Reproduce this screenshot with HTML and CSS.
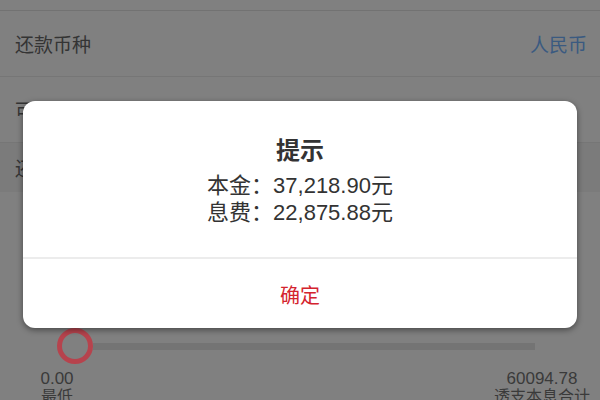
FILE: index.html
```html
<!DOCTYPE html>
<html lang="zh-CN">
<head>
<meta charset="utf-8">
<title>提示</title>
<link rel="stylesheet" href="styles.css">
</head>
<body>
<div class="page">
  <div class="stub"></div>
  <div class="row">
    <span class="label">还款币种</span>
    <span class="value">人民币</span>
  </div>
  <div class="row">
    <span class="label">可还金额</span>
  </div>
  <div class="section">
    <span class="label">还款金额</span>
  </div>
  <div class="slider-area">
    <div class="slider">
      <div class="knob"></div>
      <div class="track"></div>
    </div>
    <div class="ends">
      <div class="end">
        <div class="num">0.00</div>
        <div class="cap">最低</div>
      </div>
      <div class="end end-right">
        <div class="num">60094.78</div>
        <div class="cap">透支本息合计</div>
      </div>
    </div>
  </div>
</div>

<div class="dialog">
  <div class="dialog-body">
    <div class="dialog-title">提示</div>
    <div class="dialog-line">本金：37,218.90元</div>
    <div class="dialog-line">息费：22,875.88元</div>
  </div>
  <div class="dialog-button">确定</div>
</div>
</body>
</html>
```

FILE: styles.css
```css
html, body {
  margin: 0;
  padding: 0;
}

body {
  width: 600px;
  height: 400px;
  overflow: hidden;
  background: #808080;
  font-family: "Liberation Sans", "Noto Sans CJK SC", sans-serif;
  color: #343434;
}

.page {
  display: flex;
  flex-direction: column;
}

.stub {
  height: 10px;
  border-bottom: 1px solid #727272;
}

.row {
  height: 65px;
  border-bottom: 1px solid #767676;
  display: flex;
  align-items: center;
  justify-content: space-between;
  padding: 0 13px 0 15px;
  font-size: 19px;
}

.label {
  font-family: "Noto Sans CJK SC", sans-serif;
}

.value {
  font-family: "Noto Sans CJK SC", sans-serif;
  color: #3a5a80;
}

.section {
  height: 49px;
  background: #7b7b7b;
  display: flex;
  align-items: center;
  padding: 0 15px;
  font-size: 19px;
}

.slider-area {
  padding-top: 136px;
}

.slider {
  display: flex;
  align-items: center;
  height: 36px;
  padding-left: 57px;
}

.knob {
  width: 26px;
  height: 26px;
  border: 5px solid #b6434d;
  border-radius: 50%;
  flex: none;
}

.track {
  width: 442px;
  height: 7px;
  background: #747474;
}

.ends {
  display: flex;
  justify-content: space-between;
  margin-top: 6px;
  padding: 0 3px 0 17px;
}

.end {
  display: flex;
  flex-direction: column;
  align-items: center;
  width: 80px;
}

.end-right {
  width: 110px;
}

.num {
  font-size: 17px;
  line-height: 17px;
  color: #3a3a3a;
}

.cap {
  font-family: "Noto Sans CJK SC", sans-serif;
  font-size: 16px;
  line-height: 17px;
  color: #3a3a3a;
}

.dialog {
  position: absolute;
  left: 23px;
  top: 101px;
  width: 554px;
  background: #ffffff;
  border-radius: 12px;
  box-shadow: 0 2px 6px rgba(0, 0, 0, 0.45);
  overflow: hidden;
}

.dialog-body {
  padding: 33px 20px 31px;
  border-bottom: 2px solid #ececec;
  display: flex;
  flex-direction: column;
  align-items: center;
  color: #333333;
}

.dialog-title {
  font-family: "Noto Sans CJK SC", sans-serif;
  font-weight: bold;
  font-size: 24px;
  line-height: 30px;
  margin-bottom: 8px;
}

.dialog-line {
  font-size: 22px;
  line-height: 27px;
}

.dialog-button {
  height: 69px;
  display: flex;
  align-items: center;
  justify-content: center;
  padding-top: 2px;
  box-sizing: border-box;
  font-family: "Noto Sans CJK SC", sans-serif;
  font-size: 20px;
  color: #d4232e;
}
```
